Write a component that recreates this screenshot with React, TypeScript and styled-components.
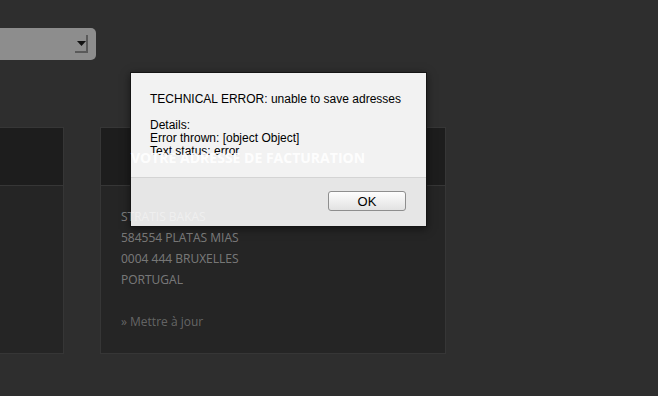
import { FC } from 'react'
import styled, { createGlobalStyle } from 'styled-components'

interface Address {
  title: string
  lines: string[]
}

const addresses: Address[] = [
  { title: 'Votre adresse de livraison', lines: ['Stratis Bakas', '584554 Platas Mias', '0004 444 Bruxelles', 'Portugal'] },
  { title: 'Votre adresse de facturation', lines: ['Stratis Bakas', '584554 Platas Mias', '0004 444 Bruxelles', 'Portugal'] },
]

const AddressCard: FC<{ address: Address }> = ({ address }) => (
  <Card>
    <CardHeader>
      <CardTitle>{address.title}</CardTitle>
    </CardHeader>
    <CardBody>
      {address.lines.map((line) => (
        <Line key={line}>{line}</Line>
      ))}
      <UpdateLink href='#'>» Mettre à jour</UpdateLink>
    </CardBody>
  </Card>
)

const App: FC = () => {
  return (
    <>
      <GlobalStyle />
      <Page>
        <Select>
          <SelectArrow>
            <svg width='9' height='5' viewBox='0 0 9 5'>
              <path d='M0 0h9L4.5 5z' fill='#111' />
            </svg>
          </SelectArrow>
        </Select>
        <Cards>
          {addresses.map((a) => (
            <AddressCard key={a.title} address={a} />
          ))}
        </Cards>
        <Alert>
          <AlertBody>
            <AlertTitle>TECHNICAL ERROR: unable to save adresses</AlertTitle>
            <div>Details:</div>
            <div>Error thrown: [object Object]</div>
            <div>Text status: error</div>
          </AlertBody>
          <AlertFooter>
            <OkButton>OK</OkButton>
          </AlertFooter>
        </Alert>
      </Page>
    </>
  )
}

export default App

const GlobalStyle = createGlobalStyle`
  html, body {
    margin: 0;
    background: #2e2e2e;
    overflow: hidden;
  }
`

const Page = styled.div`
  position: relative;
  width: 658px;
  height: 396px;
  padding-top: 28px;
  box-sizing: border-box;
  background: #2e2e2e;
  overflow: hidden;
  font-family: 'Open Sans', sans-serif;
`

const Select = styled.div`
  display: flex;
  justify-content: flex-end;
  align-items: center;
  width: 300px;
  height: 32px;
  margin-left: -204px;
  padding-right: 8px;
  box-sizing: border-box;
  background: #8d8d8d;
  border-radius: 5px;
`

const SelectArrow = styled.div`
  display: flex;
  align-items: center;
  justify-content: center;
  width: 13px;
  height: 18px;
  box-sizing: border-box;
  border-right: 2px solid #5a5a5a;
  border-bottom: 2px solid #5a5a5a;
  padding-left: 1px;
`

const Cards = styled.div`
  display: flex;
  gap: 36px;
  margin-top: 67px;
  margin-left: -282px;
`

const Card = styled.div`
  width: 346px;
  flex-shrink: 0;
  border: 1px solid #363636;
  box-sizing: border-box;
  background: #252525;
`

const CardHeader = styled.div`
  display: flex;
  align-items: center;
  height: 57px;
  padding: 0 30px;
  background: #1d1d1d;
  border-bottom: 1px solid #363636;
`

const CardTitle = styled.h2`
  position: relative;
  z-index: 2;
  margin: 2px 0 0;
  font-size: 14px;
  font-weight: 700;
  text-transform: uppercase;
  color: rgba(255, 255, 255, 0.92);
`

const CardBody = styled.div`
  display: flex;
  flex-direction: column;
  align-items: flex-start;
  padding: 20px 20px 21px;
`

const Line = styled.div`
  position: relative;
  z-index: 2;
  font-size: 12px;
  line-height: 21px;
  text-transform: uppercase;
  color: rgba(255, 255, 255, 0.4);
`

const UpdateLink = styled.a`
  margin-top: 21px;
  font-size: 12px;
  line-height: 21px;
  text-decoration: none;
  color: rgba(255, 255, 255, 0.3);
`

const Alert = styled.div`
  position: absolute;
  z-index: 1;
  left: 130px;
  top: 72px;
  width: 297px;
  display: flex;
  flex-direction: column;
  border: 1px solid #151515;
  box-sizing: border-box;
  font-family: 'Liberation Sans', Arial, sans-serif;
  font-size: 12px;
  line-height: 13px;
  color: #000;
  box-shadow: 0 2px 8px rgba(0, 0, 0, 0.5);
`

const AlertBody = styled.div`
  height: 105px;
  padding: 20px 19px 0;
  box-sizing: border-box;
  background: #f2f2f2;
  border-bottom: 1px solid #d4d4d4;
`

const AlertTitle = styled.div`
  margin-bottom: 13px;
`

const AlertFooter = styled.div`
  display: flex;
  justify-content: flex-end;
  height: 48px;
  padding: 13px 20px 0;
  box-sizing: border-box;
  background: #e6e6e6;
`

const OkButton = styled.button`
  width: 78px;
  height: 20px;
  padding: 0;
  border: 1px solid #8e8e8e;
  border-radius: 3px;
  background: linear-gradient(#fdfdfd, #e2e2e2);
  font-family: 'Liberation Sans', Arial, sans-serif;
  font-size: 13px;
  color: #000;
`
